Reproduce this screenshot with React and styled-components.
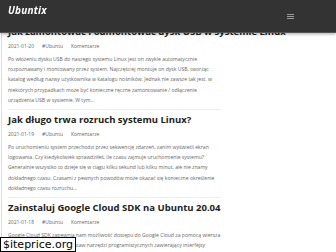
import React from 'react';
import styled, { createGlobalStyle } from 'styled-components';

const posts = [
  {
    title: 'Jak zamontować i odmontować dysk USB w systemie Linux',
    date: '2021-01-20',
    category: 'Ubuntu',
    excerpt:
      'Po włożeniu dysku USB do naszego systemu Linux jest on zwykle automatycznie rozpoznawany i montowany przez system. Najczęściej montuje on dysk USB, tworząc katalog według nazwy użytkownika w katalogu nośników. Jednak nie zawsze tak jest. w niektórych przypadkach może być konieczne ręczne zamontowanie / odłączenie urządzenia USB w systemie. W tym...',
  },
  {
    title: 'Jak długo trwa rozruch systemu Linux?',
    date: '2021-01-19',
    category: 'Ubuntu',
    excerpt:
      'Po uruchomieniu system przechodzi przez sekwencję zdarzeń, zanim wyświetli ekran logowania. Czy kiedykolwiek sprawdziłeś, ile czasu zajmuje uruchomienie systemu? Generalnie wszystko to dzieje się w ciągu kilku sekund lub kilku minut, ale nie znamy dokładnego czasu. Czasami z pewnych powodów może okazać się konieczne określenie dokładnego czasu rozruchu...',
  },
  {
    title: 'Zainstaluj Google Cloud SDK na Ubuntu 20.04',
    date: '2021-01-18',
    category: 'Ubuntu',
    excerpt:
      'Google Cloud SDK zapewnia nam możliwość dostępu do Google Cloud za pomocą wiersza poleceń, ponieważ jest to zestaw narzędzi programistycznych zawierający interfejsy gcloud, gsutil i bq do zarządzania zasobami w środowisku Google Cloud...',
  },
];

const App = () => {
  return (
    <>
      <GlobalStyle />
      <Header>
        <Logo>Ubuntix</Logo>
        <Burger aria-label="menu">
          <span />
          <span />
          <span />
        </Burger>
      </Header>
      <Main>
        {posts.map((post, i) => (
          <Article key={i}>
            <Title>{post.title}</Title>
            <Meta>
              <span>{post.date}</span>
              <span>#{post.category}</span>
              <span>Komentarze</span>
            </Meta>
            <Excerpt>{post.excerpt}</Excerpt>
          </Article>
        ))}
      </Main>
      <Watermark>$iteprice.org</Watermark>
    </>
  );
};

const GlobalStyle = createGlobalStyle`
  body {
    margin: 0;
    background: #fff;
    font-family: "Open Sans", "Liberation Sans", sans-serif;
  }
`;

const Header = styled.header`
  position: fixed;
  top: 0;
  left: 0;
  right: 0;
  height: 32px;
  z-index: 5;
  display: flex;
  align-items: flex-start;
  justify-content: space-between;
  padding: 0 42px 0 8px;
  background: #333;
  border-bottom: 1px solid #555;
  box-shadow: 0 1px 3px rgba(0, 0, 0, 0.35);
`;

const Logo = styled.div`
  margin-top: 3px;
  color: #fff;
  font-size: 10px;
  font-weight: 700;
  font-style: italic;
  letter-spacing: 0.2px;
`;

const Burger = styled.div`
  margin-top: 14px;
  display: flex;
  flex-direction: column;
  gap: 1px;

  span {
    display: block;
    width: 7px;
    height: 1px;
    background: #999;
  }
`;

const Main = styled.main`
  margin-left: 1px;
  border-left: 1px solid #ddd;
  padding: 24.5px 0 0 6px;
  width: 213px;
`;

const Article = styled.article`
  padding: 0 0 3px;
  margin-bottom: 3px;
  border-bottom: 1px solid #eee;
`;

const Title = styled.h2`
  margin: 0 0 4px;
  color: #222;
  font-size: 9.5px;
  font-weight: 700;
  line-height: 13px;
  white-space: nowrap;
`;

const Meta = styled.div`
  display: flex;
  gap: 8px;
  margin-bottom: 3px;
  color: #666;
  font-size: 5px;
  line-height: 9px;
`;

const Excerpt = styled.p`
  margin: 0;
  color: #666;
  font-size: 5.1px;
  line-height: 10.4px;
`;

const Watermark = styled.div`
  position: fixed;
  left: 0;
  bottom: 0;
  padding: 0 2px;
  background: #fff;
  border: 1px solid #000;
  color: #000;
  font-family: "DejaVu Sans", sans-serif;
  font-size: 11px;
  line-height: 13px;
`;

export default App;
